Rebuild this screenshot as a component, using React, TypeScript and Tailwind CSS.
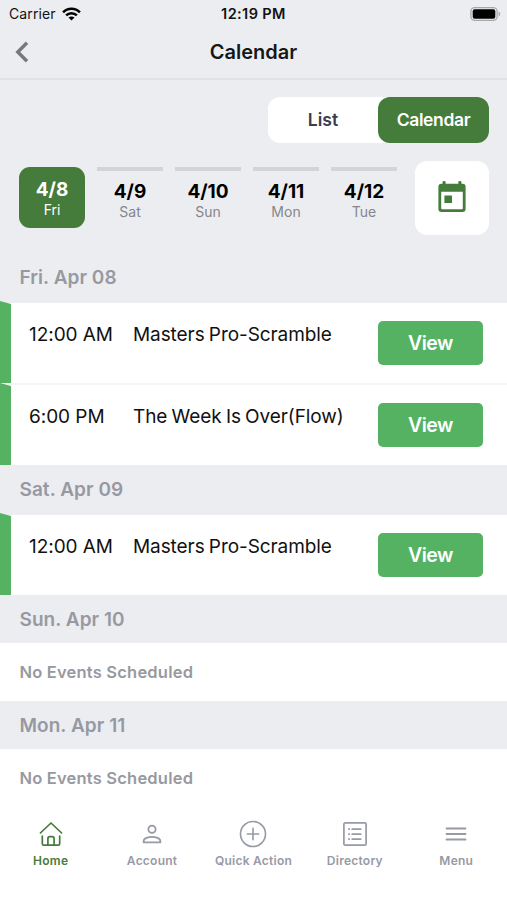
import clsx from 'clsx'
import type { ReactNode } from 'react'

interface CalendarEvent {
  time: string
  title: string
}

interface Day {
  date: string
  weekday: string
  active?: boolean
}

interface Section {
  label: string
  events: CalendarEvent[]
}

interface Tab {
  label: string
  icon: ReactNode
  active?: boolean
}

const days: Day[] = [
  { date: '4/8', weekday: 'Fri', active: true },
  { date: '4/9', weekday: 'Sat' },
  { date: '4/10', weekday: 'Sun' },
  { date: '4/11', weekday: 'Mon' },
  { date: '4/12', weekday: 'Tue' },
]

const sections: Section[] = [
  {
    label: 'Fri. Apr 08',
    events: [
      { time: '12:00 AM', title: 'Masters Pro-Scramble' },
      { time: '6:00 PM', title: 'The Week Is Over(Flow)' },
    ],
  },
  {
    label: 'Sat. Apr 09',
    events: [{ time: '12:00 AM', title: 'Masters Pro-Scramble' }],
  },
  { label: 'Sun. Apr 10', events: [] },
  { label: 'Mon. Apr 11', events: [] },
]

function HomeIcon() {
  return (
    <svg width="24" height="26" viewBox="0 0 24 26" fill="none" stroke="currentColor" strokeWidth="1.7" strokeLinecap="round" strokeLinejoin="round">
      <path d="M1.4 12 12 2l10.6 10" />
      <path d="M3.300 15v7.800q0 1.400 1.400 1.400h14.600q1.400 0 1.400-1.400V15" />
      <path d="M8.900 24v-6.300q0-2 2-2h2.200q2 0 2 2V24" />
    </svg>
  )
}

function AccountIcon() {
  return (
    <svg width="20" height="26" viewBox="0 0 20 26" fill="none" stroke="currentColor" strokeWidth="1.8" strokeLinejoin="round">
      <circle cx="10" cy="8.300" r="3.600" />
      <path d="M1.700 21.400v-1.600c0-2.500 4.800-4 8.300-4s8.300 1.500 8.300 4v1.600z" />
    </svg>
  )
}

function PlusIcon() {
  return (
    <svg width="28" height="28" viewBox="0 0 28 28" fill="none" stroke="currentColor" strokeWidth="1.6" strokeLinecap="round">
      <circle cx="14" cy="14" r="12.500" />
      <path d="M14 8.300v11.400M8.300 14h11.400" />
    </svg>
  )
}

function DirectoryIcon() {
  return (
    <svg width="26" height="26" viewBox="0 0 26 26" fill="none" stroke="currentColor" strokeWidth="1.7">
      <rect x="1.900" y="1.900" width="22.200" height="22.200" rx="1.200" />
      <path d="M10.200 8.200h8.500M10.200 13.200h8.500M10.200 18.200h8.500" strokeLinecap="round" />
      <path d="M6.200 8.200h1.700M6.200 13.200h1.700M6.200 18.200h1.700" />
    </svg>
  )
}

function MenuIcon() {
  return (
    <svg width="22" height="26" viewBox="0 0 22 26" stroke="currentColor" strokeWidth="1.8" strokeLinecap="round">
      <path d="M1.500 7.500h19M1.500 13h19M1.500 18.500h19" />
    </svg>
  )
}

const tabs: Tab[] = [
  { label: 'Home', icon: <HomeIcon />, active: true },
  { label: 'Account', icon: <AccountIcon /> },
  { label: 'Quick Action', icon: <PlusIcon /> },
  { label: 'Directory', icon: <DirectoryIcon /> },
  { label: 'Menu', icon: <MenuIcon /> },
]

function StatusBar() {
  return (
    <div className="grid h-[27px] grid-cols-3 items-center text-[14px] text-[#111214]">
      <div className="flex items-center gap-[6px] pl-[9px]">
        <span className="tracking-[0.1px]">Carrier</span>
        <svg width="19" height="14" viewBox="0 0 19 14" fill="none" stroke="#000" strokeWidth="2.500">
          <path d="M1.100 5.300c4.600-4.800 12.200-4.800 16.800 0M4.100 8.400c3-3 7.800-3 10.800 0" />
          <path d="M9.500 13.500 6.500 10.600c1.700-1.500 4.300-1.500 6 0z" fill="#000" stroke="none" />
        </svg>
      </div>
      <div className="text-center text-[14.500px] font-semibold tracking-[0.4px]">12:19 PM</div>
      <div className="flex justify-end pr-[6px]">
        <svg width="31" height="14" viewBox="0 0 31 14">
          <rect x=".9" y=".6" width="26.200" height="12.800" rx="3.800" fill="none" stroke="#a6a7aa" strokeWidth="1.300" />
          <rect x="2.700" y="2.300" width="22.600" height="9.400" rx="2" fill="#000" />
          <path d="M28.600 4.600c2.200.8 2.200 4 0 4.800z" fill="#a6a7aa" />
        </svg>
      </div>
    </div>
  )
}

function Header() {
  return (
    <header className="grid h-[53px] grid-cols-3 items-center border-b-2 border-[#e1e2e5]">
      <button aria-label="Back" className="pb-px pl-[15px] text-[#77787b]">
        <svg width="14" height="22" viewBox="0 0 14 22" fill="none" stroke="currentColor" strokeWidth="3.400">
          <path d="M12 1.800 2.800 11l9.200 9.200" />
        </svg>
      </button>
      <h1 className="pb-px text-center text-[20px] font-semibold text-[#15171a]">Calendar</h1>
    </header>
  )
}

function DayTile({ date, weekday, active }: Day) {
  return (
    <button
      className={clsx(
        'flex h-[61px] w-[66px] flex-col items-center',
        active
          ? 'rounded-[11px] bg-[#457b3b] pt-[11px] text-white'
          : 'border-t-4 border-[#d2d4d8] pt-[9px] text-black',
      )}
    >
      <span className="mt-px text-[19px] leading-[22px] font-bold">{date}</span>
      <span className={clsx('-mt-px text-[14px] leading-5', !active && 'text-[#85868b]')}>
        {weekday}
      </span>
    </button>
  )
}

function EventRow({ time, title, divided }: CalendarEvent & { divided: boolean }) {
  return (
    <div
      className={clsx(
        'flex h-[82px] border-t-2 bg-white',
        divided ? 'border-[#f3f4f6]' : 'border-[#ecedf1]',
      )}
    >
      <div className="-mt-[2px] w-[11px] bg-[#55b262] [clip-path:polygon(0_0,100%_3px,100%_100%,0_100%)]" />
      <div className="w-[104px] pt-[18px] pl-[18px] text-[19px] leading-7 tracking-[-0.05px] whitespace-nowrap text-[#111]">
        {time}
      </div>
      <div className="flex-1 pt-[18px] pl-[18px] text-[19px] leading-7 tracking-[-0.08px] whitespace-nowrap text-[#111] [word-spacing:-1px]">
        {title}
      </div>
      <button className="mt-[18px] mr-6 h-[44px] w-[105px] rounded-[5px] bg-[#55b262] pt-[2px] text-[19.500px] font-semibold tracking-[-0.5px] text-white">
        View
      </button>
    </div>
  )
}

export default function App() {
  return (
    <div className="flex h-[900px] w-[507px] flex-col overflow-hidden bg-[#ecedf1] font-['Inter','Liberation_Sans',sans-serif]">
      <StatusBar />
      <Header />
      <div className="flex justify-end pt-[17px] pr-[18px]">
        <div className="flex h-[46px] w-[221px] rounded-[12px] bg-white text-[17.500px] font-semibold">
          <button className="flex-1 pt-px text-[#3a3d4a]">List</button>
          <button className="w-[111px] rounded-[12px] bg-[#457b3b] pt-px tracking-[-0.35px] text-white">
            Calendar
          </button>
        </div>
      </div>
      <div className="flex items-start justify-between pt-[18px] pr-[18px] pl-[19px]">
        <div className="flex gap-3 pt-[6px]">
          {days.map((day) => (
            <DayTile key={day.date} {...day} />
          ))}
        </div>
        <button
          aria-label="Pick a date"
          className="grid h-[74px] w-[74px] place-items-center rounded-[12px] bg-white pb-[3px] text-[#457b3b]"
        >
          <svg width="28" height="32" viewBox="0 0 28 32" fill="currentColor">
            <rect x="4.600" y="0" width="3" height="6" rx="1.200" />
            <rect x="20.400" y="0" width="3" height="6" rx="1.200" />
            <path
              fillRule="evenodd"
              d="M3.400 2.800h21.200A3 3 0 0 1 27.600 5.800v22.200A3 3 0 0 1 24.600 31H3.400A3 3 0 0 1 .4 28V5.800A3 3 0 0 1 3.400 2.800zM3.200 10.800v16.600q0 .8.8.8h20q.8 0 .8-.8V10.800z"
            />
            <rect x="6.400" y="14.400" width="7.600" height="7.600" rx=".5" />
          </svg>
        </button>
      </div>
      <main className="flex-1 pt-[18px]">
        {sections.map(({ label, events }) => (
          <section key={label}>
            <h2 className="flex h-12 items-center pt-[2px] pl-[19.500px] text-[19px] font-semibold tracking-[0.05px] text-[#9799a2]">
              {label}
            </h2>
            {events.map((event, i) => (
              <EventRow key={event.title} divided={i > 0} {...event} />
            ))}
            {events.length === 0 && (
              <p className="flex h-[58px] items-center bg-white pl-[19.500px] text-[16.500px] font-semibold tracking-[0.2px] text-[#97999f]">
                No Events Scheduled
              </p>
            )}
          </section>
        ))}
      </main>
      <nav className="grid h-[93px] grid-cols-5 bg-white pt-[12px]">
        {tabs.map(({ label, icon, active }) => (
          <button
            key={label}
            className={clsx(
              'flex flex-col items-center text-[12px] font-semibold tracking-[0.25px] whitespace-nowrap',
              active ? 'text-[#457b3b]' : 'text-[#979aa5]',
            )}
          >
            <span className="grid h-[30px] place-items-center">{icon}</span>
            <span className="mt-[2px] leading-5">{label}</span>
          </button>
        ))}
      </nav>
    </div>
  )
}
